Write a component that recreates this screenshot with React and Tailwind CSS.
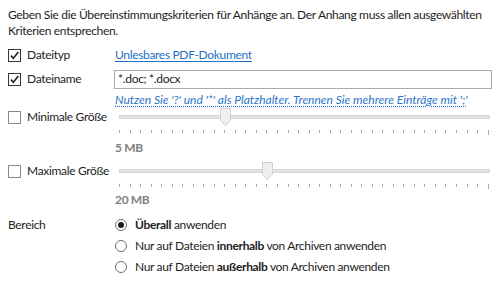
import React from "react";

function Check({ checked }) {
  return (
    <span className={"relative inline-flex h-[13px] w-[13px] shrink-0 items-center justify-center border bg-white " + (checked ? "border-[#333333]" : "border-[#8a8a8a]")}>
      {checked && (
        <svg width="11" height="11" viewBox="0 0 11 11" className="absolute">
          <path d="M1.8 5.6 L4.3 8.2 L9.4 1.9" fill="none" stroke="#222" strokeWidth="1.6" />
        </svg>
      )}
    </span>
  );
}

function Radio({ checked }) {
  return (
    <span className="inline-flex h-[12px] w-[12px] shrink-0 items-center justify-center rounded-full border border-[#6f6f6f] bg-white">
      {checked && <span className="h-[6px] w-[6px] rounded-full bg-[#1b1b1b]" />}
    </span>
  );
}

function Slider({ pos }) {
  const ticks = Array.from({ length: 36 });
  return (
    <div className="flex w-[371px] flex-col">
      <div className="relative h-[18px]">
        <div className="absolute left-0 right-0 top-[7px] h-[4px] bg-[#e2e3e3] border border-[#d6d7d7]" />
        <svg width="11" height="18" viewBox="0 0 11 18" className="absolute top-0" style={{ left: pos }}>
          <path d="M0.5 0.5 H10.5 V12.5 L5.5 17.5 L0.5 12.5 Z" fill="#efefef" stroke="#cfcfcf" />
        </svg>
      </div>
      <div className="mt-[4px] flex h-[5px] items-start justify-between pr-[1px]">
        {ticks.map((_, i) => (
          <span key={i} className={"w-px bg-[#a8a8a8] " + (i === 35 ? "h-[5px]" : "h-[3px]")} />
        ))}
      </div>
    </div>
  );
}

export default function App() {
  return (
    <div className="h-[300px] w-[501px] bg-white text-[12px] leading-[16px] tracking-[-0.33px] text-[#1e1e1e]" style={{ fontFamily: '"Segoe UI", Lato, sans-serif' }}>
      <div className="px-[8px] pt-[7px]">
        <p className="w-[490px]">Geben Sie die Übereinstimmungskriterien für Anhänge an. Der Anhang muss allen ausgewählten Kriterien entsprechen.</p>

        <div className="mt-[5px] flex h-[22px] items-center whitespace-nowrap">
          <div className="flex w-[107px] items-center gap-[6px]">
            <Check checked />
            <span>Dateityp</span>
          </div>
          <span className="text-[#1f6fc5] underline underline-offset-2">Unlesbares PDF-Dokument</span>
        </div>

        <div className="mt-[2px] flex h-[22px] items-center whitespace-nowrap">
          <div className="flex w-[106px] items-center gap-[6px]">
            <Check checked />
            <span>Dateiname</span>
          </div>
          <div className="flex h-[19px] w-[378px] items-center border border-[#acacac] px-[3px]">*.doc; *.docx</div>
        </div>

        <div className="mt-[2px] flex h-[16px] items-center whitespace-nowrap pl-[107px]">
          <span className="italic tracking-normal text-[#2a74c9] underline decoration-dotted underline-offset-2">Nutzen Sie '?' und '*' als Platzhalter. Trennen Sie mehrere Einträge mit ';'</span>
        </div>

        <div className="flex items-start whitespace-nowrap">
          <div className="flex h-[18px] w-[111px] items-center gap-[6px]">
            <Check />
            <span>Minimale Größe</span>
          </div>
          <Slider pos="101px" />
        </div>
        <div className="mt-[5px] pl-[107px] font-bold text-[#808080]">5 MB</div>

        <div className="mt-[6px] flex items-start whitespace-nowrap">
          <div className="flex h-[18px] w-[111px] items-center gap-[6px]">
            <Check />
            <span>Maximale Größe</span>
          </div>
          <Slider pos="143px" />
        </div>
        <div className="mt-[3px] pl-[107px] font-bold text-[#808080]">20 MB</div>

        <div className="mt-[8px] flex items-start whitespace-nowrap">
          <div className="w-[107px] leading-[18px]">Bereich</div>
          <div className="flex flex-col gap-[3px]">
            <div className="flex h-[18px] items-center gap-[8px]">
              <Radio checked />
              <span><b>Überall</b> anwenden</span>
            </div>
            <div className="flex h-[18px] items-center gap-[8px]">
              <Radio />
              <span>Nur auf Dateien <b>innerhalb</b> von Archiven anwenden</span>
            </div>
            <div className="flex h-[18px] items-center gap-[8px]">
              <Radio />
              <span>Nur auf Dateien <b>außerhalb</b> von Archiven anwenden</span>
            </div>
          </div>
        </div>
      </div>
    </div>
  );
}
